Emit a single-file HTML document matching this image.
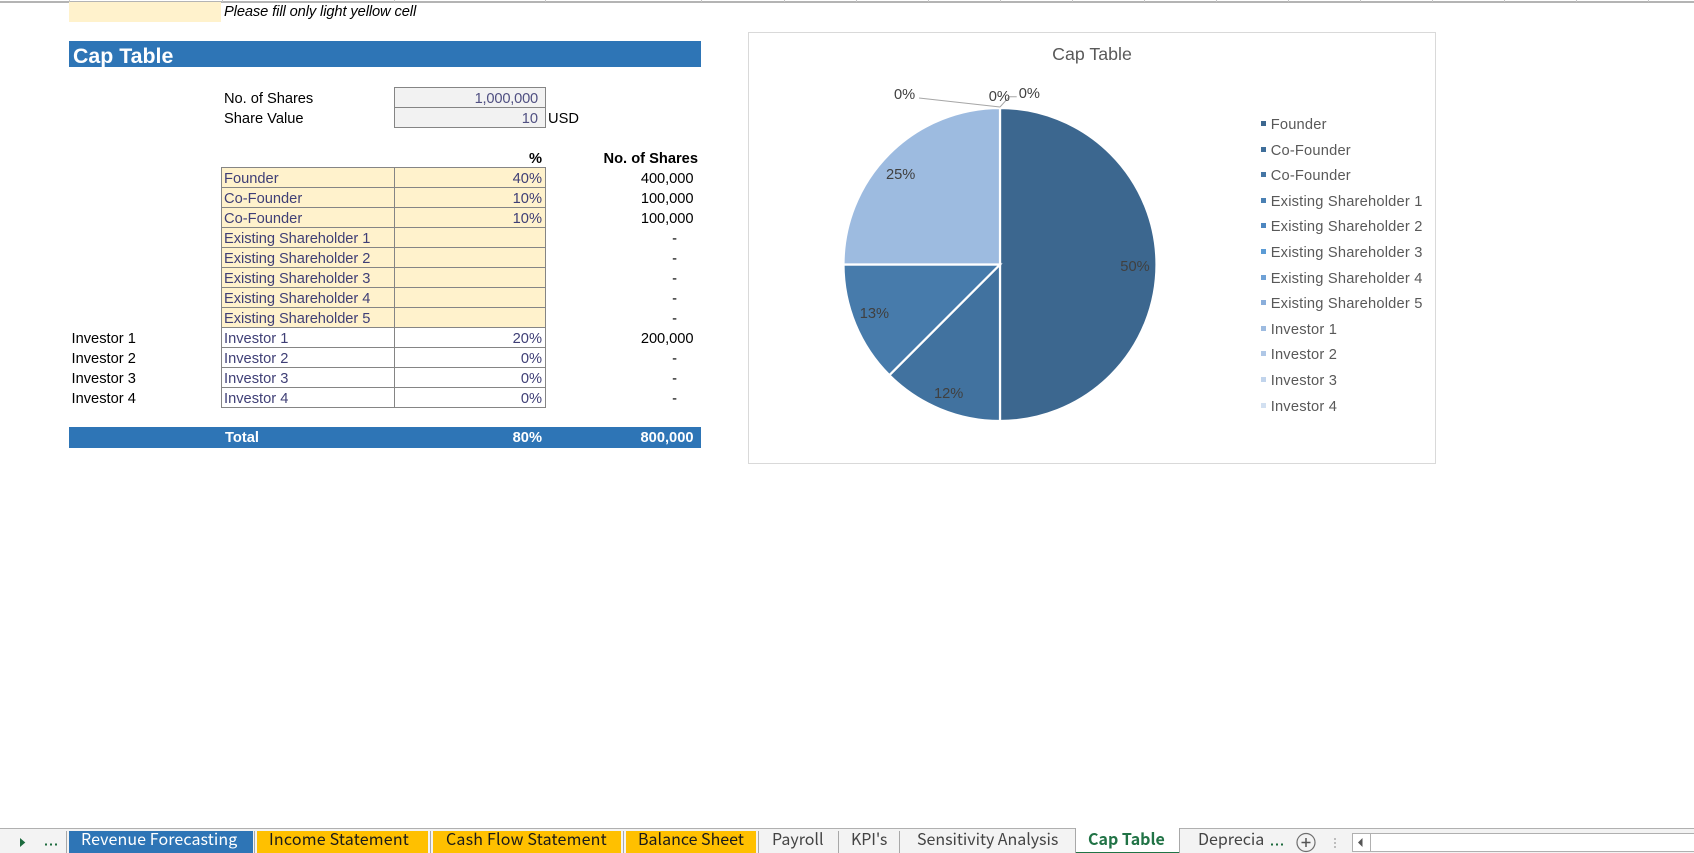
<!DOCTYPE html>
<html><head><meta charset="utf-8"><title>Cap Table</title>
<style>
html,body{margin:0;padding:0;background:#fff;}
#p{position:relative;width:1694px;height:853px;overflow:hidden;background:#fff;font-family:"Liberation Sans",Arial,sans-serif;font-size:14.67px;color:#000;}
.t,.r{position:absolute;white-space:nowrap;height:20px;line-height:20px;}
.r{text-align:right;}
.in{color:#3f3f76;}
.b{font-weight:bold;}
.w{color:#fff;}
.bx{position:absolute;box-sizing:border-box;}
.hl{position:absolute;background:#858585;height:1px;}
.vl{position:absolute;background:#858585;width:1px;}
.tk{position:absolute;top:0;width:1px;height:2px;background:#c6c6c6;}
.tab{position:absolute;white-space:nowrap;top:828px;height:20px;line-height:20px;font-family:"Noto Sans CJK JP","Liberation Sans",sans-serif;font-size:16px;letter-spacing:.1px;color:#444;}
.tb{position:absolute;top:831px;height:22px;}
.sp{position:absolute;top:831px;height:22px;width:1px;background:#a8a8a8;}
</style></head><body><div id="p">

<div class="bx" style="left:0;top:1px;width:1694px;height:2px;background:#b4b4b4"></div>
<i class="tk" style="left:69px"></i><i class="tk" style="left:222px"></i><i class="tk" style="left:394px"></i><i class="tk" style="left:545px"></i><i class="tk" style="left:701px"></i><i class="tk" style="left:784px"></i><i class="tk" style="left:856px"></i><i class="tk" style="left:928px"></i><i class="tk" style="left:1000px"></i><i class="tk" style="left:1072px"></i><i class="tk" style="left:1144px"></i><i class="tk" style="left:1216px"></i><i class="tk" style="left:1288px"></i><i class="tk" style="left:1360px"></i><i class="tk" style="left:1432px"></i><i class="tk" style="left:1504px"></i><i class="tk" style="left:1576px"></i><i class="tk" style="left:1648px"></i>

<div class="bx" style="left:69px;top:2px;width:152px;height:20px;background:#fff2cc"></div>
<span class="t" style="left:224px;top:2px;font-style:italic;letter-spacing:-.1px">Please fill only light yellow cell</span>

<div class="bx" style="left:69px;top:41px;width:632px;height:26px;background:#2e75b6"></div>
<span class="t b w" style="left:73px;top:46px;font-size:21.33px">Cap Table</span>

<span class="t" style="left:224px;top:89px;letter-spacing:-.03px">No. of Shares</span>
<span class="t" style="left:224px;top:109px">Share Value</span>
<div class="bx" style="left:394px;top:87px;width:152px;height:41px;background:#f2f2f2;border:1px solid #858585"></div>
<div class="hl" style="left:394px;top:107px;width:152px"></div>
<span class="r in" style="left:394px;width:144px;top:89px;letter-spacing:-.2px;opacity:.9">1,000,000</span>
<span class="r in" style="left:394px;width:144px;top:109px;opacity:.9">10</span>
<span class="t" style="left:548px;top:109px">USD</span>

<span class="r b" style="left:400px;width:142px;top:149px">%</span>
<span class="r b" style="left:560px;width:138px;top:149px">No. of Shares</span>

<div class="bx" style="left:222px;top:167px;width:324px;height:160px;background:#fff2cc"></div>
<div class="hl" style="left:221px;top:167px;width:325px"></div>
<div class="hl" style="left:221px;top:187px;width:325px"></div>
<div class="hl" style="left:221px;top:207px;width:325px"></div>
<div class="hl" style="left:221px;top:227px;width:325px"></div>
<div class="hl" style="left:221px;top:247px;width:325px"></div>
<div class="hl" style="left:221px;top:267px;width:325px"></div>
<div class="hl" style="left:221px;top:287px;width:325px"></div>
<div class="hl" style="left:221px;top:307px;width:325px"></div>
<div class="hl" style="left:221px;top:327px;width:325px"></div>
<div class="hl" style="left:221px;top:347px;width:325px"></div>
<div class="hl" style="left:221px;top:367px;width:325px"></div>
<div class="hl" style="left:221px;top:387px;width:325px"></div>
<div class="hl" style="left:221px;top:407px;width:325px"></div>
<div class="vl" style="left:221px;top:167px;height:241px"></div>
<div class="vl" style="left:394px;top:167px;height:241px"></div>
<div class="vl" style="left:545px;top:167px;height:241px"></div>

<span class="t in" style="left:224px;top:169px">Founder</span>
<span class="t in" style="left:224px;top:189px">Co-Founder</span>
<span class="t in" style="left:224px;top:209px">Co-Founder</span>
<span class="t in" style="left:224px;top:229px;letter-spacing:-.05px">Existing Shareholder 1</span>
<span class="t in" style="left:224px;top:249px;letter-spacing:-.05px">Existing Shareholder 2</span>
<span class="t in" style="left:224px;top:269px;letter-spacing:-.05px">Existing Shareholder 3</span>
<span class="t in" style="left:224px;top:289px;letter-spacing:-.05px">Existing Shareholder 4</span>
<span class="t in" style="left:224px;top:309px;letter-spacing:-.05px">Existing Shareholder 5</span>
<span class="t in" style="left:224px;top:329px">Investor 1</span>
<span class="t in" style="left:224px;top:349px">Investor 2</span>
<span class="t in" style="left:224px;top:369px">Investor 3</span>
<span class="t in" style="left:224px;top:389px">Investor 4</span>

<span class="r in" style="left:400px;width:142px;top:169px">40%</span>
<span class="r in" style="left:400px;width:142px;top:189px">10%</span>
<span class="r in" style="left:400px;width:142px;top:209px">10%</span>
<span class="r in" style="left:400px;width:142px;top:329px">20%</span>
<span class="r in" style="left:400px;width:142px;top:349px">0%</span>
<span class="r in" style="left:400px;width:142px;top:369px">0%</span>
<span class="r in" style="left:400px;width:142px;top:389px">0%</span>

<span class="r" style="left:600px;width:93.500px;top:169px;letter-spacing:-.05px">400,000</span>
<span class="r" style="left:600px;width:93.500px;top:189px;letter-spacing:-.05px">100,000</span>
<span class="r" style="left:600px;width:93.500px;top:209px;letter-spacing:-.05px">100,000</span>
<span class="r" style="left:600px;width:77px;top:229px">-</span>
<span class="r" style="left:600px;width:77px;top:249px">-</span>
<span class="r" style="left:600px;width:77px;top:269px">-</span>
<span class="r" style="left:600px;width:77px;top:289px">-</span>
<span class="r" style="left:600px;width:77px;top:309px">-</span>
<span class="r" style="left:600px;width:93.500px;top:329px;letter-spacing:-.05px">200,000</span>
<span class="r" style="left:600px;width:77px;top:349px">-</span>
<span class="r" style="left:600px;width:77px;top:369px">-</span>
<span class="r" style="left:600px;width:77px;top:389px">-</span>

<span class="t" style="left:71.500px;top:329px">Investor 1</span>
<span class="t" style="left:71.500px;top:349px">Investor 2</span>
<span class="t" style="left:71.500px;top:369px">Investor 3</span>
<span class="t" style="left:71.500px;top:389px">Investor 4</span>

<div class="bx" style="left:69px;top:427px;width:632px;height:21px;background:#2e75b6"></div>
<span class="t b w" style="left:225px;top:428px">Total</span>
<span class="r b w" style="left:400px;width:142px;top:428px">80%</span>
<span class="r b w" style="left:600px;width:93.500px;top:428px">800,000</span>

<svg style="position:absolute;left:0;top:0" width="1694" height="853" viewBox="0 0 1694 853" font-family="Liberation Sans, Arial, sans-serif">
<rect x="748.5" y="32.5" width="687" height="431" fill="#fff" stroke="#d9d9d9" stroke-width="1"/>
<text x="1092" y="60" font-size="17.8" fill="#595959" text-anchor="middle">Cap Table</text>
<g stroke="#fff" stroke-width="2.2">
<path d="M1000 264.5V108A156.5 156.500 0 0 1 1000 421Z" fill="#3c678f"/>
<path d="M1000 264.5V421A156.5 156.500 0 0 1 889.34 375.16Z" fill="#41729f"/>
<path d="M1000 264.5L889.34 375.16A156.5 156.500 0 0 1 843.5 264.5Z" fill="#477bab"/>
<path d="M1000 264.5H843.5A156.5 156.500 0 0 1 1000 108Z" fill="#9dbbe0"/>
</g>
<g fill="none" stroke="#a6a6a6" stroke-width="1">
<path d="M919 98L1000 107"/>
<path d="M1000 107L1009.3 96.7H1016.7"/>
</g>
<g font-size="14.67" fill="#404040">
<text x="894" y="99">0%</text>
<text x="988.7" y="101">0%</text>
<text x="1018.7" y="98">0%</text>
<text x="886" y="179">25%</text>
<text x="1120.3" y="271">50%</text>
<text x="859.7" y="318">13%</text>
<text x="934" y="398">12%</text>
</g>
<g>
<rect x="1261" y="121" width="5" height="5" fill="#3c678f"/>
<rect x="1261" y="147" width="5" height="5" fill="#3f6e9a"/>
<rect x="1261" y="172" width="5" height="5" fill="#4576a5"/>
<rect x="1261" y="198" width="5" height="5" fill="#4a80b3"/>
<rect x="1261" y="223" width="5" height="5" fill="#4d86c0"/>
<rect x="1261" y="249" width="5" height="5" fill="#5b9bd5"/>
<rect x="1261" y="275" width="5" height="5" fill="#6fa1d6"/>
<rect x="1261" y="300" width="5" height="5" fill="#8aaedb"/>
<rect x="1261" y="326" width="5" height="5" fill="#9dbbe0"/>
<rect x="1261" y="351" width="5" height="5" fill="#afc7e6"/>
<rect x="1261" y="377" width="5" height="5" fill="#c1d4ec"/>
<rect x="1261" y="403" width="5" height="5" fill="#d2e0f1"/>
</g>
<g font-size="14.67" fill="#595959" letter-spacing=".2">
<text x="1270.7" y="129">Founder</text>
<text x="1270.7" y="155">Co-Founder</text>
<text x="1270.7" y="180">Co-Founder</text>
<text x="1270.7" y="206">Existing Shareholder 1</text>
<text x="1270.7" y="231">Existing Shareholder 2</text>
<text x="1270.7" y="257">Existing Shareholder 3</text>
<text x="1270.7" y="283">Existing Shareholder 4</text>
<text x="1270.7" y="308">Existing Shareholder 5</text>
<text x="1270.7" y="334">Investor 1</text>
<text x="1270.7" y="359">Investor 2</text>
<text x="1270.7" y="385">Investor 3</text>
<text x="1270.7" y="411">Investor 4</text>
</g>
</svg>

<!-- tab bar -->
<div class="bx" style="left:0;top:829px;width:1694px;height:24px;background:#f3f3f3"></div>
<div class="bx" style="left:0;top:828px;width:1694px;height:1px;background:#b0b0b0"></div>
<div class="bx" style="left:1075px;top:828px;width:105px;height:25px;background:#fff;border-left:1px solid #a8a8a8;border-right:1px solid #a8a8a8;box-sizing:border-box"></div>
<div class="bx" style="left:1076px;top:852px;width:103px;height:1px;background:#217346"></div>

<svg style="position:absolute;left:0;top:825px" width="80" height="28" viewBox="0 0 80 28">
<path d="M20 13L25.300 17.500L20 22Z" fill="#1d6b3e"/>
<rect x="45" y="18.500" width="2" height="2" fill="#1d6b3e"/><rect x="50" y="18.500" width="2" height="2" fill="#1d6b3e"/><rect x="55" y="18.500" width="2" height="2" fill="#1d6b3e"/>
</svg>

<i class="sp" style="left:66px"></i>
<div class="tb" style="left:69px;width:184px;background:#2e75b6"></div>
<i class="sp" style="left:254px"></i>
<div class="tb" style="left:257px;width:171px;background:#ffc000"></div>
<i class="sp" style="left:430px"></i>
<div class="tb" style="left:433px;width:188px;background:#ffc000"></div>
<i class="sp" style="left:623px"></i>
<div class="tb" style="left:626px;width:130px;background:#ffc000"></div>
<i class="sp" style="left:758px"></i>
<i class="sp" style="left:838px"></i>
<i class="sp" style="left:899px"></i>

<span class="tab" style="left:81px;color:#fff">Revenue Forecasting</span>
<span class="tab" style="left:269px;color:#1a1a1a;letter-spacing:.2px">Income Statement</span>
<span class="tab" style="left:446px;color:#1a1a1a;letter-spacing:.2px">Cash Flow Statement</span>
<span class="tab" style="left:638px;color:#1a1a1a;letter-spacing:0">Balance Sheet</span>
<span class="tab" style="left:772px;letter-spacing:0">Payroll</span>
<span class="tab" style="left:851px;letter-spacing:-.1px">KPI's</span>
<span class="tab" style="left:917px;letter-spacing:-.03px">Sensitivity Analysis</span>
<span class="tab" style="left:1088px;color:#217346;font-weight:bold;letter-spacing:0">Cap Table</span>
<span class="tab" style="left:1198px;letter-spacing:0">Deprecia</span>

<svg style="position:absolute;left:1270px;top:825px" width="120" height="28" viewBox="0 0 120 28">
<rect x="1" y="18.500" width="2" height="2" fill="#1d6b3e"/><rect x="6" y="18.500" width="2" height="2" fill="#1d6b3e"/><rect x="11" y="18.500" width="2" height="2" fill="#1d6b3e"/>
<circle cx="36" cy="17.500" r="9" fill="none" stroke="#6e6e6e" stroke-width="1.2"/>
<path d="M36 13V22M31.500 17.500H40.500" stroke="#555" stroke-width="1.5" fill="none"/>
<g fill="#bdbdbd"><rect x="64" y="13" width="2" height="2"/><rect x="64" y="17" width="2" height="2"/><rect x="64" y="21" width="2" height="2"/></g>
</svg>

<div class="bx" style="left:1352px;top:833px;width:342px;height:19px;background:#fff;border:1px solid #b0b0b0;border-right:0"></div>
<div class="bx" style="left:1370px;top:833px;width:1px;height:19px;background:#b0b0b0"></div>
<svg style="position:absolute;left:1352px;top:833px" width="19" height="19" viewBox="0 0 19 19">
<path d="M10.500 5L6 9.500L10.500 14Z" fill="#555"/>
</svg>

</div></body></html>
